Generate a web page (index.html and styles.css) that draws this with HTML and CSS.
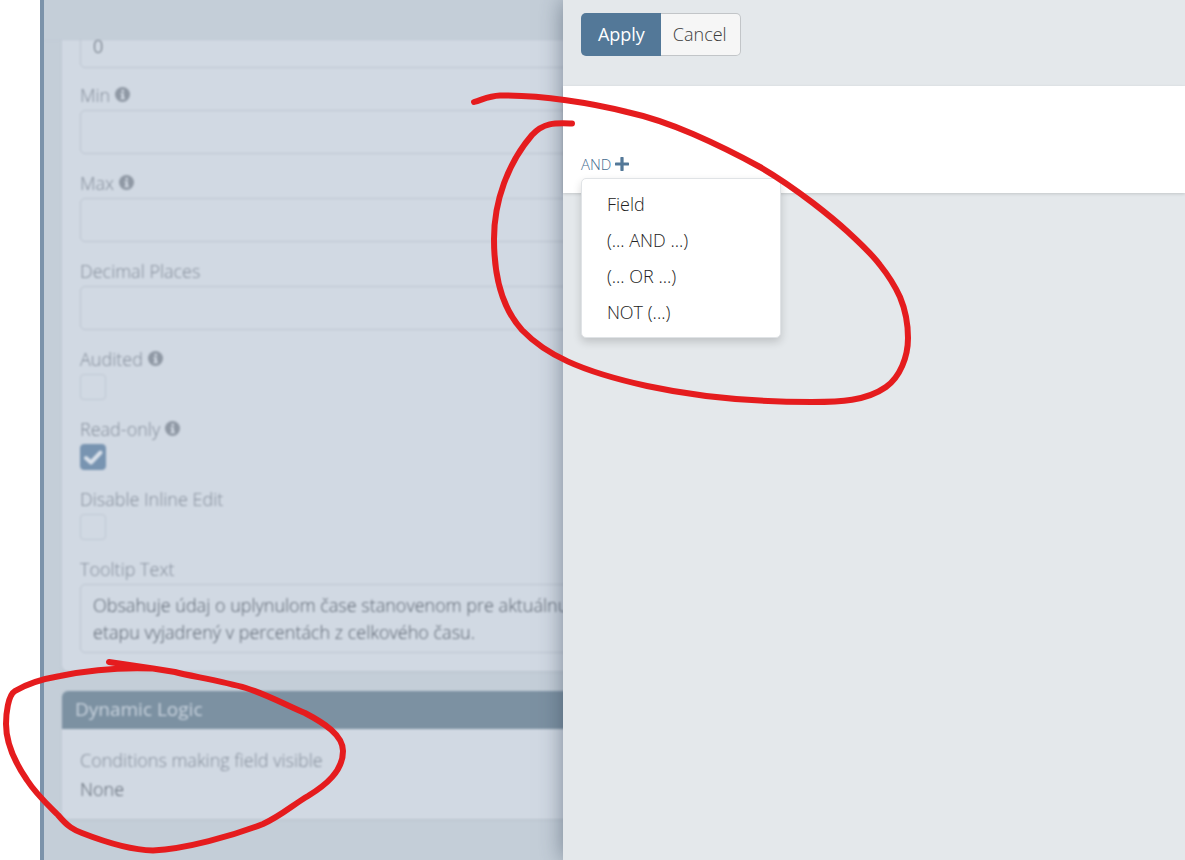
FILE: index.html
```html
<!DOCTYPE html>
<html lang="en">
<head>
<meta charset="utf-8">
<title>Field Manager</title>
<link rel="stylesheet" href="styles.css">
</head>
<body>
<svg class="symbols" aria-hidden="true">
  <symbol id="info" viewBox="0 0 16 16"><circle cx="8" cy="8" r="8" fill="currentColor"/><path class="info-mark" d="M7 3h2.500v2.500H7zM6 6.700h3.500v4.600h1V13H6v-1.700h1V8.400H6z"/></symbol>
</svg>
<div class="app">
  <main class="backdrop">
    <div class="page">
      <div class="navbar"></div>
      <section class="panel panel-scrolled">
        <div class="field field-clipped"><input class="text-input" type="text" value="0" aria-label="Default"></div>
        <div class="field">
          <label class="label" for="min">Min <svg class="info"><use href="#info"/></svg></label>
          <input class="text-input" id="min" type="text">
        </div>
        <div class="field">
          <label class="label" for="max">Max <svg class="info"><use href="#info"/></svg></label>
          <input class="text-input" id="max" type="text">
        </div>
        <div class="field">
          <label class="label" for="decimals">Decimal Places</label>
          <input class="text-input" id="decimals" type="text">
        </div>
        <div class="field">
          <label class="label" for="audited">Audited <svg class="info"><use href="#info"/></svg></label>
          <span class="check"><input class="check-input" id="audited" type="checkbox"></span>
        </div>
        <div class="field">
          <label class="label" for="readonly">Read-only <svg class="info"><use href="#info"/></svg></label>
          <span class="check"><input class="check-input" id="readonly" type="checkbox" checked><svg class="check-mark" viewBox="0 0 26 26"><path d="M6 14l5 4.500L20.500 8.500"/></svg></span>
        </div>
        <div class="field">
          <label class="label" for="inline-edit">Disable Inline Edit</label>
          <span class="check"><input class="check-input" id="inline-edit" type="checkbox"></span>
        </div>
        <div class="field">
          <label class="label" for="tooltip">Tooltip Text</label>
          <textarea class="text-area" id="tooltip" rows="2">Obsahuje údaj o uplynulom čase stanovenom pre aktuálnu
etapu vyjadrený v percentách z celkového času.</textarea>
        </div>
      </section>
      <section class="panel">
        <h2 class="panel-title">Dynamic Logic</h2>
        <div class="panel-body">
          <div class="label">Conditions making field visible</div>
          <div class="value">None</div>
        </div>
      </section>
    </div>
  </main>
  <aside class="drawer">
    <header class="drawer-header">
      <button class="button button-primary" type="button">Apply</button><button class="button" type="button">Cancel</button>
    </header>
    <section class="conditions">
      <div class="dropdown">
        <a class="dropdown-toggle" href="#">AND <svg class="plus" viewBox="0 0 13 13"><path d="M6.500 1v11M1 6.500h11"/></svg></a>
        <ul class="menu">
          <li><a class="menu-item" href="#">Field</a></li>
          <li><a class="menu-item" href="#">(... AND ...)</a></li>
          <li><a class="menu-item" href="#">(... OR ...)</a></li>
          <li><a class="menu-item" href="#">NOT (...)</a></li>
        </ul>
      </div>
    </section>
  </aside>
  <svg class="marks" width="1185" height="860" viewBox="0 0 1185 860" aria-hidden="true">
    <path d="M474 102C484 99 489 96 500 95.500C542 95 592 103 627 112C650 117 672 125 693 134C716 144 740 156 760 167C779 178 796 190 813 203C826 213 837 222 848 232C860 243 871 253 880 265C888 275 895 286 900 297C905 309 908 323 908 338C908 357 900 377 886 387C866 401 840 402 812 402C745 402 693 396 647 386C579 371 545 354 522 330C501 307 494 275 494 239C494 201 508 163 532 135C544 122 556 123 572 123.500"/>
    <path d="M109 662L153 668.500C115 667 84 671 60 676C42 679 25 685 15 691C8 695 6 714 6 724C6 745 16 764 27 780C36 794 47 804 58 815C68 827 74 830 82 833C105 842 131 850 153 850.500C186 849 232 836 263 824C281 816 294 804 308 796C326 785 343 771 343 751C343 735 324 723 305 713C286 705 266 694 246 688C222 681 190 676 175 672L153 668.500"/>
  </svg>
</div>
</body>
</html>
```
FILE: styles.css
```css
* { box-sizing: border-box; }

body {
  margin: 0;
  background: #fff;
  font-family: "Open Sans", "Noto Sans", sans-serif;
  font-size: 18px;
  font-weight: 300;
  line-height: 26px;
  color: #222;
}

a { color: inherit; text-decoration: none; }

.symbols { position: absolute; width: 0; height: 0; }
.info-mark { fill: #d1d9e3; }

.app {
  position: relative;
  display: grid;
  grid-template-columns: 19fr 21fr;
  height: 100vh;
  overflow: hidden;
}

/* Dimmed page behind the drawer */
.backdrop {
  min-width: 0;
  margin-left: 40px;
  overflow: hidden;
  background: #c4ced8;
  border-left: 4px solid #7c93aa;
}

.page {
  width: 100vw;
  padding-left: 18px;
  filter: blur(1px);
}

.navbar {
  position: relative;
  z-index: 1;
  height: 39px;
  margin-left: -18px;
  background: #c4ced8;
  box-shadow: 0 1px 1px #c0cad5;
}

.panel {
  margin-bottom: 20px;
  background: #d1d9e3;
  border-radius: 6px;
  box-shadow: 0 1px 2px #b7c1cc;
}

.panel-scrolled {
  margin-top: -33px;
  padding: 18px;
}

.field { display: flex; flex-direction: column; margin-bottom: 18px; }
.field-clipped { margin-bottom: 16px; }
.field:last-child { margin-bottom: 0; }

.label {
  display: flex;
  align-items: center;
  gap: 5px;
  height: 26px;
  padding-bottom: 5px;
  color: #828b98;
}

.info { width: 15px; height: 15px; color: #8f98a4; }

.text-input,
.text-area {
  width: 100%;
  height: 44px;
  padding: 0 12px;
  border: 1px solid #bcc5d0;
  border-radius: 5px;
  background: transparent;
  color: #59626e;
  font: inherit;
  outline: none;
}

.text-area {
  height: 69px;
  padding: 7px 12px;
  line-height: 27px;
  white-space: pre;
  overflow: hidden;
  resize: none;
}

.check { display: grid; width: 26px; height: 26px; }

.check-input,
.check-mark { grid-area: 1 / 1; width: 26px; height: 26px; margin: 0; }

.check-input {
  appearance: none;
  border: 1px solid #bfc8d3;
  border-radius: 4px;
}

.check-input:checked { background: #7894b1; border-color: #7894b1; }

.check-mark {
  fill: none;
  stroke: #d8e0ea;
  stroke-width: 4;
  stroke-linecap: round;
  stroke-linejoin: round;
  pointer-events: none;
}

.panel-title {
  height: 38px;
  margin: 0;
  padding: 0 13px;
  border-radius: 6px 6px 0 0;
  background: #7c91a2;
  color: #c9d3de;
  font-size: 19px;
  font-weight: 400;
  line-height: 36px;
}

.panel-body { padding: 20px 18px 16px; }
.value { color: #59626e; line-height: 28px; }

/* Drawer */
.drawer {
  position: relative;
  min-width: 0;
  background: #e4e8eb;
  box-shadow: 0 0 22px rgba(40, 55, 75, 0.5);
}

.drawer-header { display: flex; height: 86px; padding: 13px 18px 30px; }

.button {
  padding: 0 13px 2px 12px;
  border: 1px solid #c2c5c8;
  border-left: 0;
  border-radius: 0 5px 5px 0;
  background: #f6f6f6;
  color: #3c3c3c;
  font: inherit;
}

.button-primary {
  padding: 0 16px 2px 17px;
  border: 0;
  border-radius: 5px 0 0 5px;
  background: #537898;
  color: #fff;
  font-weight: 400;
}

.conditions {
  height: 107px;
  padding: 65px 18px 0;
  background: #fff;
  box-shadow: 0 1px 3px rgba(0, 0, 0, 0.15);
}

.dropdown { position: relative; }

.dropdown-toggle {
  display: flex;
  align-items: center;
  gap: 4px;
  color: #456c8f;
  font-size: 15px;
}

.plus { width: 14px; height: 14px; fill: none; stroke: #537898; stroke-width: 3; stroke-linecap: round; }

.menu {
  position: absolute;
  top: 27px;
  left: 0;
  width: 200px;
  margin: 0;
  padding: 7px 0;
  list-style: none;
  background: #fff;
  border: 1px solid #e0e3e6;
  border-radius: 5px;
  box-shadow: 0 4px 9px rgba(0, 0, 0, 0.16);
}

.menu-item { display: block; padding: 0 25px; line-height: 36px; }

/* Hand-drawn highlights over the interface */
.marks {
  position: absolute;
  top: 0;
  left: 0;
  fill: none;
  stroke: #e51c1e;
  stroke-width: 6;
  stroke-linecap: round;
  stroke-linejoin: round;
  pointer-events: none;
}
```
